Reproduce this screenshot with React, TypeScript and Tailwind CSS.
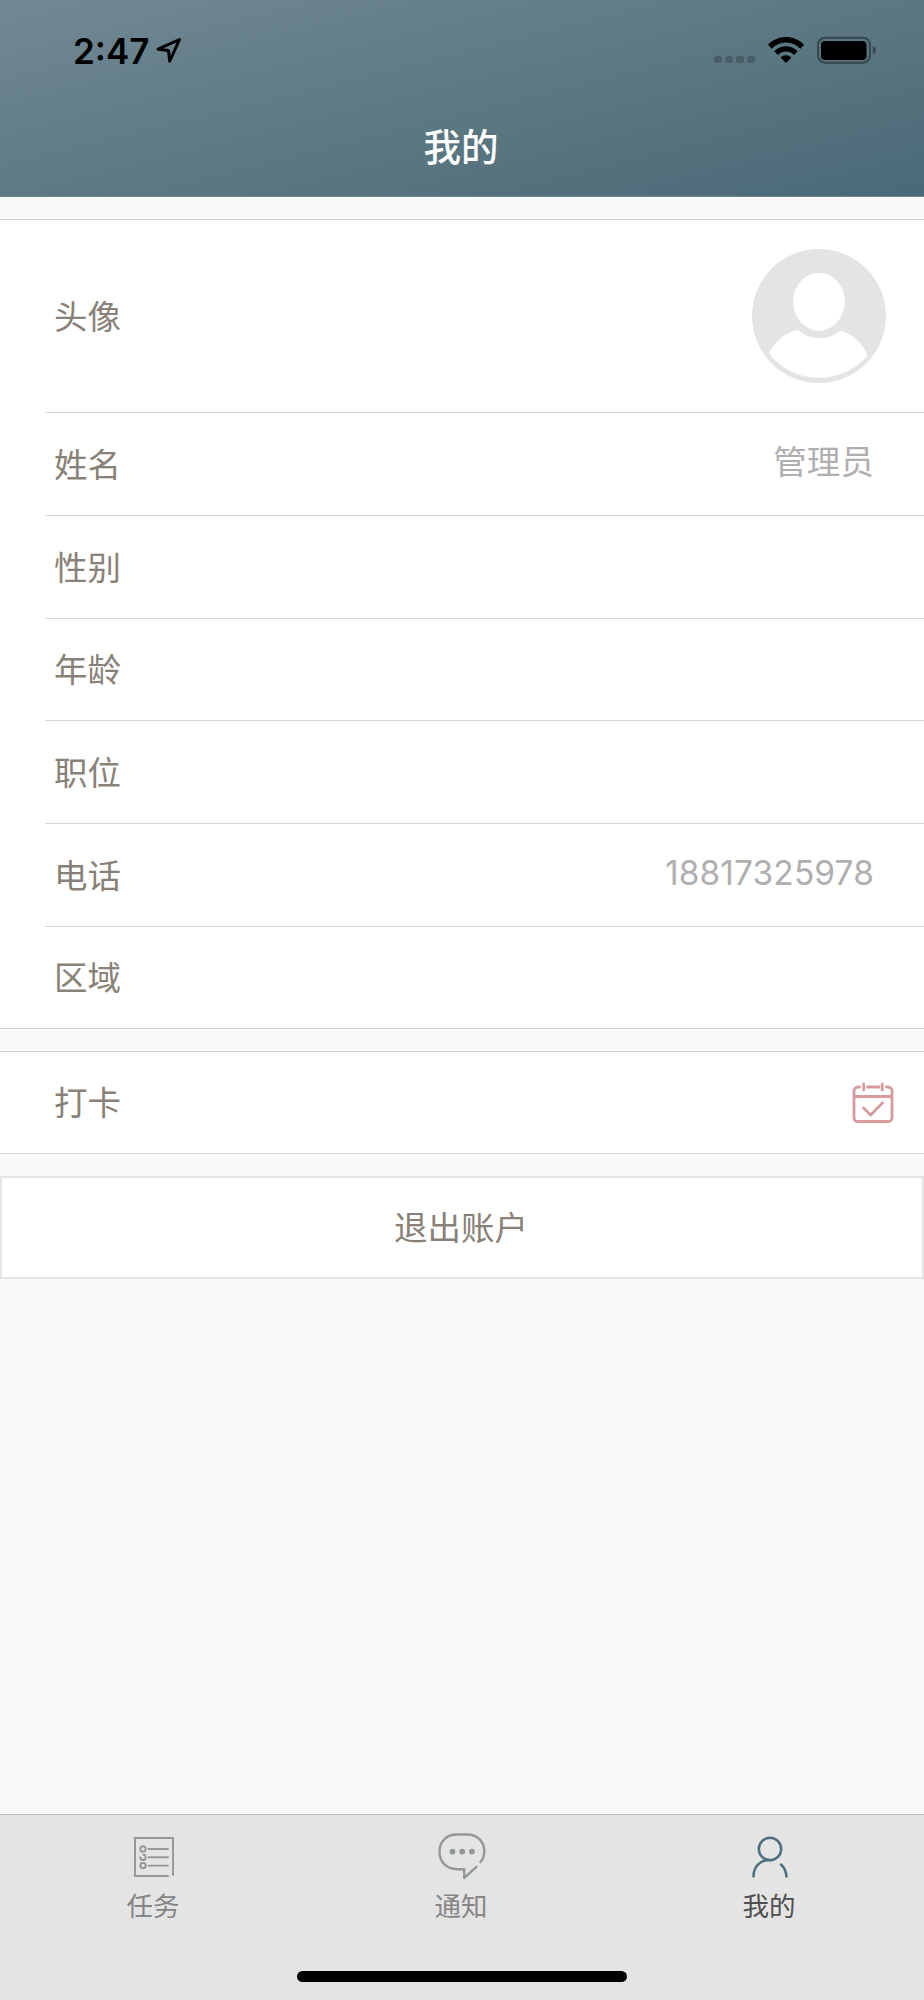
import React from 'react';

const rows = [
  { label: '姓名', value: '管理员', h: 'h-[103px]' },
  { label: '性别', value: '', h: 'h-[103px]' },
  { label: '年龄', value: '', h: 'h-[102px]' },
  { label: '职位', value: '', h: 'h-[103px]' },
  { label: '电话', value: '18817325978', h: 'h-[103px]' },
  { label: '区域', value: '', h: 'h-[102px]' },
];

function StatusBar() {
  return (
    <div className="flex h-[100px] items-start justify-between pl-[73px] pr-[47px] text-black">
      <div className="flex items-start pt-[30px]">
        <span className="text-[35px] font-semibold leading-[42px]">2:47</span>
        <svg className="ml-[6px] mt-[5px]" width="28" height="30" viewBox="0 0 28 30" fill="none" stroke="currentColor" strokeWidth="3" strokeLinejoin="round">
          <path d="M24.5 4.5 3 14.2l10.5 1.3 1.2 10.7Z" />
        </svg>
      </div>
      <div className="flex items-start pt-[36px]">
        <div className="mt-[20px] flex gap-[3px]">
          {[0, 1, 2, 3].map((i) => (
            <span key={i} className="h-[7px] w-[8px] rounded-[2.5px] bg-black/20" />
          ))}
        </div>
        <svg className="ml-[12px]" width="38" height="28" viewBox="0 0 38 28">
          <path d="M1 8.7C11.2-1.5 26.8-1.5 37 8.7l-3.6 4C25.2 4.5 12.8 4.5 4.6 12.7Z" fill="currentColor" />
          <path d="M7.3 15.2c6.6-6.6 16.8-6.6 23.4 0l-3.6 3.7c-4.7-4.5-11.5-4.5-16.2 0Z" fill="currentColor" />
          <path d="M13.6 21.4c3.2-2.8 7.6-2.8 10.8 0L19 27Z" fill="currentColor" />
        </svg>
        <svg className="ml-[12px]" width="60" height="28" viewBox="0 0 60 28">
          <rect x="1.1" y="1.7" width="51.8" height="25" rx="7" fill="none" stroke="black" strokeOpacity=".4" strokeWidth="2" />
          <rect x="4" y="5" width="45.5" height="19" rx="4" fill="currentColor" />
          <path d="M55.8 10c4 1.5 4 7 0 8.5Z" fill="black" fillOpacity=".4" />
        </svg>
      </div>
    </div>
  );
}

function Avatar() {
  return (
    <svg className="mb-px" width="134" height="134" viewBox="0 0 134 134">
      <circle cx="67" cy="67" r="67" fill="#e4e4e4" />
      <ellipse cx="67" cy="52.7" rx="25.8" ry="29" fill="white" />
      <path d="M17 104.5C23 92 33 84 45.8 80.8C57.5 92 77 92 88.5 81.5C101 85 111 94.5 115.500 106.5C91 136 42 137 17 104.5Z" fill="white" />
    </svg>
  );
}

function CalendarIcon() {
  return (
    <svg width="42" height="42" viewBox="0 0 42 42" fill="none" stroke="#d99a9c" strokeWidth="2.8" strokeLinecap="round" strokeLinejoin="round">
      <path d="M7.5 5H6a4 4 0 0 0-4 4v27a3.5 3.5 0 0 0 3.5 3.5h31A3.5 3.5 0 0 0 40 36V9a4 4 0 0 0-4-4h-1.5M15.5 5h11.5M11.7 2v6M30.2 2v6M2 14.5h38M11.5 26l7.2 7 12-12.3" />
    </svg>
  );
}

function TaskIcon() {
  return (
    <svg width="42" height="42" viewBox="0 0 42 42" fill="none" stroke="#929799" strokeWidth="1.9" strokeLinecap="round">
      <path d="M35 40H2V2h38v37M15.5 13H35M15.5 21.3H35M15.5 29.6H35" />
      <circle cx="10" cy="13" r="2.7" />
      <path d="M10 18.600a2.700 2.700 0 1 1-2.700 2.700" />
      <circle cx="10" cy="29.6" r="2.7" />
    </svg>
  );
}

function MessageIcon() {
  return (
    <svg width="50" height="50" viewBox="0 0 50 50" fill="none" stroke="#929799" strokeWidth="2.4" strokeLinecap="round" strokeLinejoin="round">
      <path d="M43.5 31C46.5 27.7 47.3 24 47.3 20C47.3 10.5 40 3.500 30 3.500H20C9.5 3.500 2.500 10.5 2.500 20.5C2.500 31.5 10 38.2 20 38.2H27.2V47L39.5 35.8" />
      <g fill="#929799" stroke="none">
        <circle cx="15.5" cy="20.6" r="2.9" />
        <circle cx="25.2" cy="20.6" r="2.9" />
        <circle cx="34.9" cy="20.6" r="2.9" />
      </g>
    </svg>
  );
}

function PersonIcon() {
  return (
    <svg width="40" height="44" viewBox="0 0 40 44" fill="none" stroke="#4b6f80" strokeWidth="2.5" strokeLinecap="round">
      <circle cx="20" cy="14" r="11.2" />
      <path d="M3.500 41.500C3.500 32 10 25 19 25M31 29.500c3.500 3.200 5.300 7.300 5.400 12" />
    </svg>
  );
}

export default function App() {
  return (
    <div className="flex h-[2000px] w-[924px] flex-col overflow-hidden bg-[#f8faf9] font-['Inter','Noto_Sans_CJK_SC',sans-serif] text-[33.5px] text-[#898177]">
      <header className="h-[197px] shrink-0 border-b border-[#6f868f] bg-[linear-gradient(166deg,#718994_0%,#57747f_65%,#4a6977_100%)]">
        <StatusBar />
        <h1 className="pr-[2px] pt-[20px] text-center text-[37.5px] font-medium leading-[56px] text-white">我的</h1>
      </header>

      <section className="mt-[22px] border-y border-[#d5d7d6] bg-white">
        <div className="flex h-[192px] items-center justify-between pl-[54px] pr-[38px]">
          <span className="pt-[2px]">头像</span>
          <Avatar />
        </div>
        {rows.map((row) => (
          <div key={row.label} className={`ml-[45px] flex ${row.h} items-center justify-between border-t border-[#d5d7d6] pl-[9px] pr-[50px]`}>
            <span className="pt-[2px]">{row.label}</span>
            <span className="mb-[3px] tracking-[0.1px] text-[#afafaf]">{row.value}</span>
          </div>
        ))}
      </section>

      <section className="mt-[22px] flex h-[103px] items-center justify-between border-y border-[#d5d7d6] bg-white pl-[54px] pr-[30px]">
        <span className="pt-[2px]">打卡</span>
        <CalendarIcon />
      </section>

      <button className="mt-[22px] h-[103px] shrink-0 border-2 border-[#e3e5e4] bg-white pr-[2px] pt-[2px]">退出账户</button>

      <nav className="mt-auto h-[186px] shrink-0 border-t border-[#b9bcbb] bg-[#e4e4e4] text-[26.5px] leading-[38px] text-[#858585]">
        <div className="grid h-[156px] grid-cols-3">
          <div className="flex flex-col items-center pt-[21px]">
            <TaskIcon />
            <span className="mt-[9px] pr-[2px]">任务</span>
          </div>
          <div className="flex flex-col items-center pt-[16px]">
            <MessageIcon />
            <span className="mt-[6px] pr-[2px]">通知</span>
          </div>
          <div className="flex flex-col items-center pt-[20px]">
            <PersonIcon />
            <span className="mt-[8px] pr-[2px] text-[#505050]">我的</span>
          </div>
        </div>
        <div className="mx-auto h-[11px] w-[330px] rounded-full bg-black" />
      </nav>
    </div>
  );
}
